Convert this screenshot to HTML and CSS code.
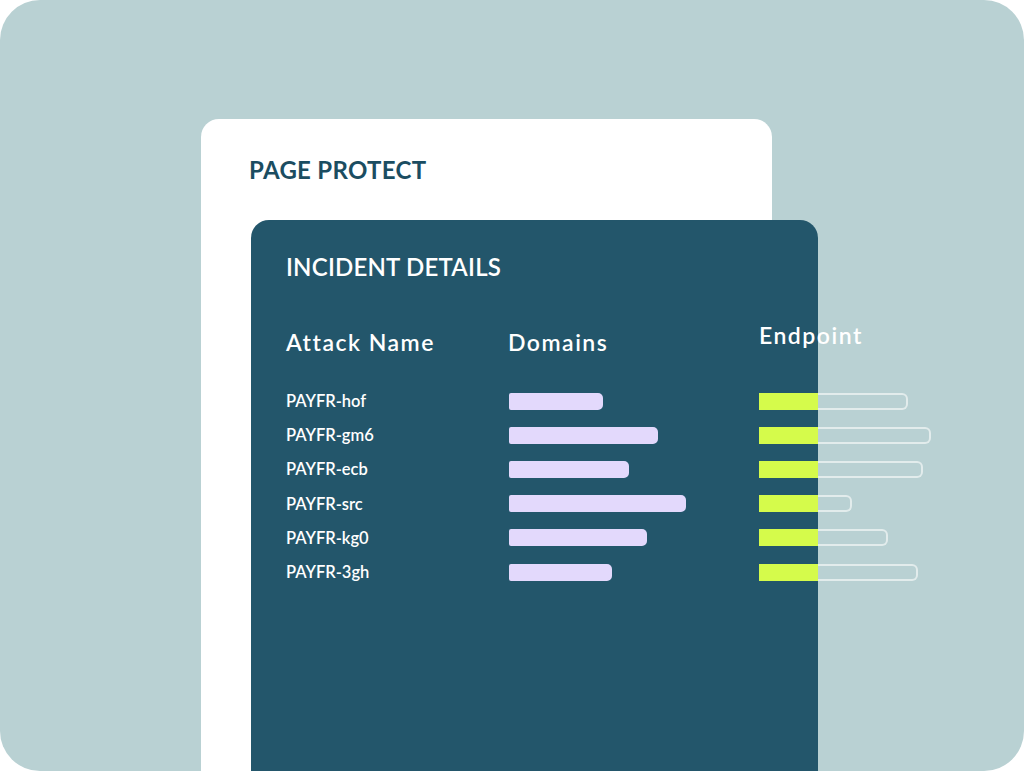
FILE: index.html
```html
<!DOCTYPE html>
<html lang="en">
<head>
  <meta charset="UTF-8" />
  <title>Page Protect - Incident Details</title>
  <link rel="stylesheet" href="styles.css">
</head>
<body>

<div class="frame">
  <div class="page-card">
    <h1 class="page-title">PAGE PROTECT</h1>

    <!-- incident panel -->
    <div class="incident">
      <h2 class="incident-title">INCIDENT DETAILS</h2>

      <div class="table">
        <div class="th">Attack Name</div>
        <div class="th">Domains</div>
        <div class="th th-raised">Endpoint</div>

        <div class="name">PAYFR-hof</div>
        <div class="cell"><div class="domain-bar" style="width:94px"></div></div>
        <div class="cell"><div class="endpoint"><div class="fill"></div><div class="rest" style="width:90px"></div></div></div>

        <div class="name">PAYFR-gm6</div>
        <div class="cell"><div class="domain-bar" style="width:149px"></div></div>
        <div class="cell"><div class="endpoint"><div class="fill"></div><div class="rest" style="width:113px"></div></div></div>

        <div class="name">PAYFR-ecb</div>
        <div class="cell"><div class="domain-bar" style="width:120px"></div></div>
        <div class="cell"><div class="endpoint"><div class="fill"></div><div class="rest" style="width:105px"></div></div></div>

        <div class="name">PAYFR-src</div>
        <div class="cell"><div class="domain-bar" style="width:177px"></div></div>
        <div class="cell"><div class="endpoint"><div class="fill"></div><div class="rest" style="width:34px"></div></div></div>

        <div class="name">PAYFR-kg0</div>
        <div class="cell"><div class="domain-bar" style="width:138px"></div></div>
        <div class="cell"><div class="endpoint"><div class="fill"></div><div class="rest" style="width:70px"></div></div></div>

        <div class="name">PAYFR-3gh</div>
        <div class="cell"><div class="domain-bar" style="width:103px"></div></div>
        <div class="cell"><div class="endpoint"><div class="fill"></div><div class="rest" style="width:100px"></div></div></div>
      </div>
    </div>
  </div>
</div>

</body>
</html>
```

FILE: styles.css
```css
* {
  box-sizing: border-box;
}
body {
  margin: 0;
  background: #ffffff;
  font-family: Lato, "Noto Sans", sans-serif;
}

.frame {
  width: 1024px;
  height: 771px;
  background: #b9d1d3;
  border-radius: 40px;
  padding: 119px 0 0 201px;
  overflow: hidden;
}

.page-card {
  width: 571px;
  height: 700px;
  background: #ffffff;
  border-radius: 18px;
  padding-top: 36px;
}

.page-title {
  margin: 0 0 0 48px;
  font-size: 24px;
  line-height: 30px;
  font-weight: 700;
  letter-spacing: 0.3px;
  color: #1b4d61;
}

.incident {
  margin: 35px -46px 0 50px;
  height: 600px;
  background: #23566b;
  border-radius: 18px;
  padding: 32px 0 0 35px;
  color: #ffffff;
}

.incident-title {
  margin: 0;
  font-size: 24px;
  line-height: 30px;
  font-weight: 600;
  letter-spacing: 0.2px;
}

.table {
  margin-top: 46px;
  display: grid;
  grid-template-columns: 223px 250px auto;
  grid-template-rows: 56px;
  grid-auto-rows: 34.2px;
  align-items: center;
}

.th {
  font-size: 23px;
  line-height: 28px;
  font-weight: 600;
  letter-spacing: 1.5px;
  align-self: start;
}
.th:nth-child(2) {
  margin-left: -1px;
}
.th-raised {
  margin-top: -7px;
}

.name {
  font-size: 16.5px;
  font-weight: 600;
}

.cell {
  display: flex;
  align-items: center;
}

.domain-bar {
  height: 17px;
  background: #e3d9fc;
  border-radius: 2px 5px 5px 2px;
}

.endpoint {
  display: flex;
  height: 17px;
}
.endpoint .fill {
  width: 59px;
  background: #d5fb4b;
}
.endpoint .rest {
  border: 2px solid #e2ecec;
  border-left: none;
  border-radius: 0 6px 6px 0;
}
```
